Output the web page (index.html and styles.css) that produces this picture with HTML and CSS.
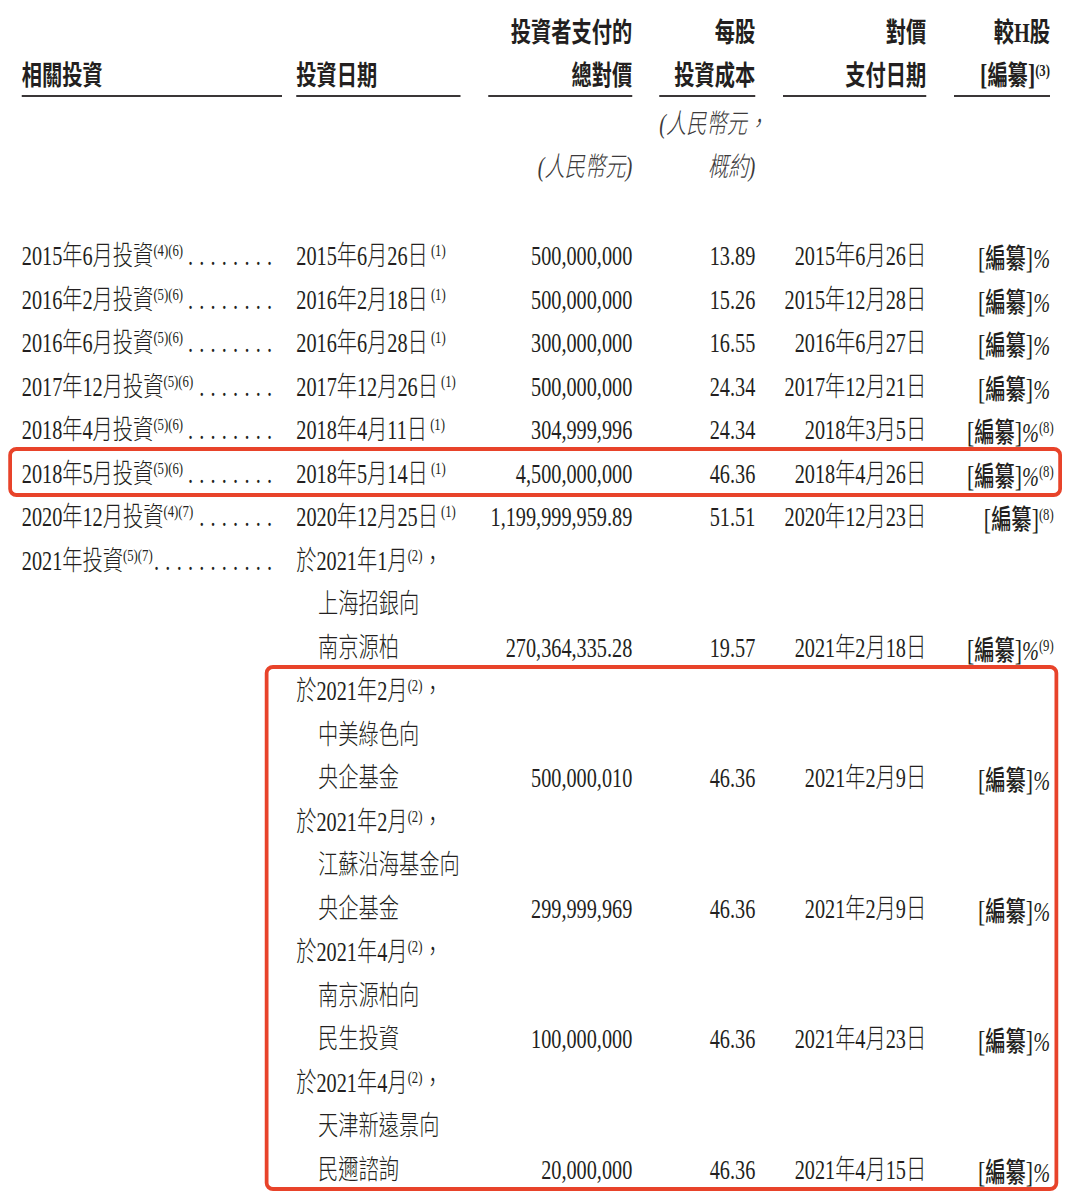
FILE: index.html
```html
<!DOCTYPE html>
<html lang="zh-Hant">
<head>
<meta charset="utf-8">
<title>相關投資</title>
<link rel="stylesheet" href="styles.css">
</head>
<body>
<div class="frame">
<div class="page">
  <div class="row head">
    <div class="c c1"><div>相關投資</div></div>
    <div class="c c2"><div>投資日期</div></div>
    <div class="c c3"><div>投資者支付的</div><div>總對價</div></div>
    <div class="c c4"><div>每股</div><div>投資成本</div></div>
    <div class="c c5"><div>對價</div><div>支付日期</div></div>
    <div class="c c6"><div>較<b class="hser">H</b>股</div><div><span class="br">[</span>編纂<span class="br">]</span><sup class="hsup">(3)</sup></div></div>
  </div>

  <div class="row units">
    <div class="c c1"></div>
    <div class="c c2"></div>
    <div class="c c3"><div>&nbsp;</div><div>(人民幣元)</div></div>
    <div class="c c4"><div>(人民幣元，</div><div>概約)</div></div>
    <div class="c c5"></div>
    <div class="c c6"></div>
  </div>

  <div class="body">
    <div class="row">
      <div class="c c1 lead"><span>2015年6月投資<sup>(4)(6)</sup></span><span class="dots">........</span></div>
      <div class="c c2">2015年6月26日<sup class="gap">(1)</sup></div>
      <div class="c c3">500,000,000</div>
      <div class="c c4">13.89</div>
      <div class="c c5">2015年6月26日</div>
      <div class="c c6"><span class="sb">[</span><span class="ph">編纂</span><span class="sb">]</span><i>%</i></div>
    </div>
    <div class="row">
      <div class="c c1 lead"><span>2016年2月投資<sup>(5)(6)</sup></span><span class="dots">........</span></div>
      <div class="c c2">2016年2月18日<sup class="gap">(1)</sup></div>
      <div class="c c3">500,000,000</div>
      <div class="c c4">15.26</div>
      <div class="c c5">2015年12月28日</div>
      <div class="c c6"><span class="sb">[</span><span class="ph">編纂</span><span class="sb">]</span><i>%</i></div>
    </div>
    <div class="row">
      <div class="c c1 lead"><span>2016年6月投資<sup>(5)(6)</sup></span><span class="dots">........</span></div>
      <div class="c c2">2016年6月28日<sup class="gap">(1)</sup></div>
      <div class="c c3">300,000,000</div>
      <div class="c c4">16.55</div>
      <div class="c c5">2016年6月27日</div>
      <div class="c c6"><span class="sb">[</span><span class="ph">編纂</span><span class="sb">]</span><i>%</i></div>
    </div>
    <div class="row">
      <div class="c c1 lead"><span>2017年12月投資<sup>(5)(6)</sup></span><span class="dots">.......</span></div>
      <div class="c c2">2017年12月26日<sup class="gap">(1)</sup></div>
      <div class="c c3">500,000,000</div>
      <div class="c c4">24.34</div>
      <div class="c c5">2017年12月21日</div>
      <div class="c c6"><span class="sb">[</span><span class="ph">編纂</span><span class="sb">]</span><i>%</i></div>
    </div>
    <div class="row">
      <div class="c c1 lead"><span>2018年4月投資<sup>(5)(6)</sup></span><span class="dots">........</span></div>
      <div class="c c2">2018年4月11日<sup class="gap">(1)</sup></div>
      <div class="c c3">304,999,996</div>
      <div class="c c4">24.34</div>
      <div class="c c5">2018年3月5日</div>
      <div class="c c6"><span class="sb">[</span><span class="ph">編纂</span><span class="sb">]</span><i>%</i><sup class="out">(8)</sup></div>
    </div>
    <div class="row mark">
      <div class="c c1 lead"><span>2018年5月投資<sup>(5)(6)</sup></span><span class="dots">........</span></div>
      <div class="c c2">2018年5月14日<sup class="gap">(1)</sup></div>
      <div class="c c3">4,500,000,000</div>
      <div class="c c4">46.36</div>
      <div class="c c5">2018年4月26日</div>
      <div class="c c6"><span class="sb">[</span><span class="ph">編纂</span><span class="sb">]</span><i>%</i><sup class="out">(8)</sup></div>
    </div>
    <div class="row">
      <div class="c c1 lead"><span>2020年12月投資<sup>(4)(7)</sup></span><span class="dots">.......</span></div>
      <div class="c c2">2020年12月25日<sup class="gap">(1)</sup></div>
      <div class="c c3">1,199,999,959.89</div>
      <div class="c c4">51.51</div>
      <div class="c c5">2020年12月23日</div>
      <div class="c c6"><span class="sb">[</span><span class="ph">編纂</span><span class="sb">]</span><sup class="out">(8)</sup></div>
    </div>
    <div class="row">
      <div class="c c1 lead"><span>2021年投資<sup>(5)(7)</sup></span><span class="dots">...........</span></div>
      <div class="c c2">於2021年1月<sup>(2)</sup>，</div>
      <div class="c c3"></div><div class="c c4"></div><div class="c c5"></div><div class="c c6"></div>
    </div>
    <div class="row">
      <div class="c c1"></div>
      <div class="c c2 ind">上海招銀向</div>
      <div class="c c3"></div><div class="c c4"></div><div class="c c5"></div><div class="c c6"></div>
    </div>
    <div class="row">
      <div class="c c1"></div>
      <div class="c c2 ind">南京源柏</div>
      <div class="c c3">270,364,335.28</div>
      <div class="c c4">19.57</div>
      <div class="c c5">2021年2月18日</div>
      <div class="c c6"><span class="sb">[</span><span class="ph">編纂</span><span class="sb">]</span><i>%</i><sup class="out">(9)</sup></div>
    </div>

    <div class="group">
      <div class="row">
        <div class="c c1"></div>
        <div class="c c2">於2021年2月<sup>(2)</sup>，</div>
        <div class="c c3"></div><div class="c c4"></div><div class="c c5"></div><div class="c c6"></div>
      </div>
      <div class="row">
        <div class="c c1"></div>
        <div class="c c2 ind">中美綠色向</div>
        <div class="c c3"></div><div class="c c4"></div><div class="c c5"></div><div class="c c6"></div>
      </div>
      <div class="row">
        <div class="c c1"></div>
        <div class="c c2 ind">央企基金</div>
        <div class="c c3">500,000,010</div>
        <div class="c c4">46.36</div>
        <div class="c c5">2021年2月9日</div>
        <div class="c c6"><span class="sb">[</span><span class="ph">編纂</span><span class="sb">]</span><i>%</i></div>
      </div>
      <div class="row">
        <div class="c c1"></div>
        <div class="c c2">於2021年2月<sup>(2)</sup>，</div>
        <div class="c c3"></div><div class="c c4"></div><div class="c c5"></div><div class="c c6"></div>
      </div>
      <div class="row">
        <div class="c c1"></div>
        <div class="c c2 ind">江蘇沿海基金向</div>
        <div class="c c3"></div><div class="c c4"></div><div class="c c5"></div><div class="c c6"></div>
      </div>
      <div class="row">
        <div class="c c1"></div>
        <div class="c c2 ind">央企基金</div>
        <div class="c c3">299,999,969</div>
        <div class="c c4">46.36</div>
        <div class="c c5">2021年2月9日</div>
        <div class="c c6"><span class="sb">[</span><span class="ph">編纂</span><span class="sb">]</span><i>%</i></div>
      </div>
      <div class="row">
        <div class="c c1"></div>
        <div class="c c2">於2021年4月<sup>(2)</sup>，</div>
        <div class="c c3"></div><div class="c c4"></div><div class="c c5"></div><div class="c c6"></div>
      </div>
      <div class="row">
        <div class="c c1"></div>
        <div class="c c2 ind">南京源柏向</div>
        <div class="c c3"></div><div class="c c4"></div><div class="c c5"></div><div class="c c6"></div>
      </div>
      <div class="row">
        <div class="c c1"></div>
        <div class="c c2 ind">民生投資</div>
        <div class="c c3">100,000,000</div>
        <div class="c c4">46.36</div>
        <div class="c c5">2021年4月23日</div>
        <div class="c c6"><span class="sb">[</span><span class="ph">編纂</span><span class="sb">]</span><i>%</i></div>
      </div>
      <div class="row">
        <div class="c c1"></div>
        <div class="c c2">於2021年4月<sup>(2)</sup>，</div>
        <div class="c c3"></div><div class="c c4"></div><div class="c c5"></div><div class="c c6"></div>
      </div>
      <div class="row">
        <div class="c c1"></div>
        <div class="c c2 ind">天津新遠景向</div>
        <div class="c c3"></div><div class="c c4"></div><div class="c c5"></div><div class="c c6"></div>
      </div>
      <div class="row">
        <div class="c c1"></div>
        <div class="c c2 ind">民邇諮詢</div>
        <div class="c c3">20,000,000</div>
        <div class="c c4">46.36</div>
        <div class="c c5">2021年4月15日</div>
        <div class="c c6"><span class="sb">[</span><span class="ph">編纂</span><span class="sb">]</span><i>%</i></div>
      </div>
    </div>
  </div>
</div>
</div>
</body>
</html>
```

FILE: styles.css
```css
html, body {
  margin: 0;
  padding: 0;
  background: #ffffff;
  overflow: hidden;
}

*, *::before, *::after {
  box-sizing: border-box;
}

.frame {
  width: 1068px;
  height: 1198px;
  overflow: hidden;
}

.page {
  width: 1424px;
  padding: 9px 0 0 29px;
  transform: scaleX(0.75);
  transform-origin: 0 0;
  color: #231f20;
  font-family: "Liberation Serif", "Noto Sans CJK TC", serif;
  font-size: 27px;
  font-weight: 300;
}

.row {
  display: flex;
  align-items: flex-start;
  height: 43.5px;
  line-height: 43.5px;
  white-space: nowrap;
}

.c { flex: none; height: 43.5px; }
.c1 { width: 347px; }
.c2 { width: 219px; margin-left: 19px; }
.c3 { width: 192px; margin-left: 37px; text-align: right; }
.c4 { width: 128px; margin-left: 36px; text-align: right; }
.c5 { width: 191px; margin-left: 37px; text-align: right; }
.c6 { width: 128px; margin-left: 37px; text-align: right; }

/* header */
.head {
  height: 88px;
  align-items: flex-end;
  line-height: 43px;
  font-family: "Noto Sans CJK TC", "Liberation Serif", sans-serif;
  font-weight: 700;
}
.head .c {
  height: auto;
  border-bottom: 2px solid #3a3637;
}
.head .c > div,
.units .c > div {
  height: 43px;
}
.hser {
  font-family: "Liberation Serif", serif;
  font-weight: 700;
}
.br {
  font-family: "Liberation Serif", serif;
  font-weight: 700;
  font-size: 29px;
}
.hsup {
  font-family: "Liberation Serif", serif;
  font-weight: 700;
}

/* units */
.units {
  height: 86px;
  margin-top: 6px;
  line-height: 43px;
  font-style: italic;
  color: #3c3a3b;
}
.units .c { height: 86px; }

.body {
  margin-top: 46px;
}

/* superscripts */
sup {
  font-size: 17px;
  line-height: 0;
  vertical-align: 9px;
}
sup.gap { margin-left: 4px; }
sup.out { margin-right: -5px; }

/* leaders */
.lead {
  display: flex;
}
.dots {
  margin-left: auto;
  margin-right: 5px;
  letter-spacing: 8.3px;
}

.ind { padding-left: 29px; }

.sb { font-size: 29px; }
.ph {
  font-family: "Noto Sans CJK TC", sans-serif;
  font-weight: 500;
}
i { font-style: italic; }

/* highlight boxes */
.mark, .group {
  position: relative;
}
.mark::after,
.group::after {
  content: "";
  position: absolute;
  border: 4px solid #e8432a;
  border-left-width: 5px;
  border-right-width: 5px;
  border-radius: 11px / 8px;
  pointer-events: none;
}
.mark::after {
  top: -6px;
  bottom: -1px;
  left: -18px;
  right: 8px;
}
.group::after {
  top: -5px;
  bottom: 1px;
  left: 324px;
  right: 13px;
}
```
